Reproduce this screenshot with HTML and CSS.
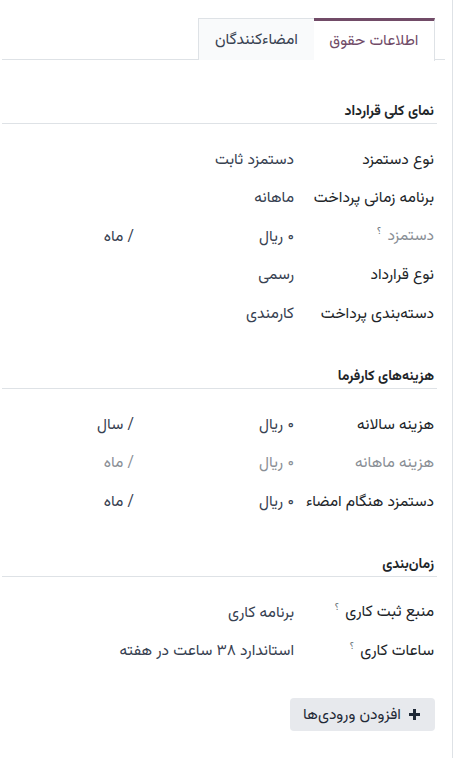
FILE: index.html
```html
<!DOCTYPE html>
<html lang="fa" dir="rtl">
<head>
    <meta charset="UTF-8">
    <meta name="viewport" content="width=device-width, initial-scale=1.0">
    <title>اطلاعات حقوق</title>
    <link rel="stylesheet" href="styles.css">
</head>
<body>
    <div class="sheet">
        <div class="tabs">
            <div class="tab active">اطلاعات حقوق</div>
            <div class="tab">امضاءکنندگان</div>
        </div>

        <div class="section first">
            <div class="section-title">نمای کلی قرارداد</div>
            <div class="row">
                <div class="label">نوع دستمزد</div>
                <div class="value">دستمزد ثابت</div>
            </div>
            <div class="row">
                <div class="label">برنامه زمانی پرداخت</div>
                <div class="value">ماهانه</div>
            </div>
            <div class="row">
                <div class="label muted">دستمزد <sup class="help">؟</sup></div>
                <div class="value">
                    <span class="amount">۰ ریال</span>
                    <span class="unit">/ ماه</span>
                </div>
            </div>
            <div class="row">
                <div class="label">نوع قرارداد</div>
                <div class="value">رسمی</div>
            </div>
            <div class="row">
                <div class="label">دسته‌بندی پرداخت</div>
                <div class="value">کارمندی</div>
            </div>
        </div>

        <div class="section">
            <div class="section-title">هزینه‌های کارفرما</div>
            <div class="row">
                <div class="label">هزینه سالانه</div>
                <div class="value">
                    <span class="amount">۰ ریال</span>
                    <span class="unit">/ سال</span>
                </div>
            </div>
            <div class="row muted">
                <div class="label">هزینه ماهانه</div>
                <div class="value">
                    <span class="amount">۰ ریال</span>
                    <span class="unit">/ ماه</span>
                </div>
            </div>
            <div class="row">
                <div class="label">دستمزد هنگام امضاء</div>
                <div class="value">
                    <span class="amount">۰ ریال</span>
                    <span class="unit">/ ماه</span>
                </div>
            </div>
        </div>

        <div class="section">
            <div class="section-title">زمان‌بندی</div>
            <div class="row">
                <div class="label">منبع ثبت کاری <sup class="help">؟</sup></div>
                <div class="value">برنامه کاری</div>
            </div>
            <div class="row">
                <div class="label">ساعات کاری <sup class="help">؟</sup></div>
                <div class="value">استاندارد ۳۸ ساعت در هفته</div>
            </div>
        </div>

        <div class="actions">
            <button class="btn-add">
                <svg class="plus" width="11" height="11" viewBox="0 0 11 11"><path d="M4 0h3v4h4v3H7v4H4V7H0V4h4z" fill="#1f2937"/></svg>
                افزودن ورودی‌ها
            </button>
        </div>
    </div>
</body>
</html>
```

FILE: styles.css
```css
* {
    box-sizing: border-box;
    margin: 0;
    padding: 0;
}

html, body {
    background: #fff;
}

body {
    font-family: "Vazirmatn", "Noto Sans Arabic", "DejaVu Sans", sans-serif;
    font-size: 15.6px;
    font-weight: 400;
    color: #212529;
    direction: rtl;
}

.sheet {
    width: 451px;
    min-height: 758px;
    border-right: 1px solid #dee2e6;
    padding-top: 18px;
}

/* tabs */
.tabs {
    display: flex;
    margin-right: 7px;
    padding-right: 10px;
    border-bottom: 1px solid #dee2e6;
    height: 42px;
}

.tab {
    height: 42px;
    padding: 0 16px;
    display: flex;
    align-items: center;
    background: #f9fafb;
    border: 1px solid #dee2e6;
    border-bottom: none;
    border-right: none;
    color: #374151;
}

.tab.active {
    background: #fff;
    color: #714b67;
    border-top: 3px solid #714b67;
    border-right: 1px solid #dee2e6;
    border-left: none;
    margin-bottom: -1px;
    height: 43px;
    padding: 0 15.5px;
}

/* sections */
.section {
    margin-right: 15px;
    margin-top: 33.75px;
}

.section.first {
    margin-top: 41.5px;
}

.section-title {
    font-weight: bold;
    font-size: 14px;
    line-height: 20px;
    padding: 0 3px 1.5px 0;
    border-bottom: 1px solid #dee2e6;
    margin-bottom: 16.25px;
}

.row {
    display: flex;
    align-items: center;
    height: 38.5px;
    padding-right: 3px;
}

.label {
    width: 140px;
    flex-shrink: 0;
}

.value {
    display: flex;
    align-items: center;
    color: #374151;
}

.amount {
    width: 160px;
}

.muted,
.muted .label,
.muted .value {
    color: #8a8f96;
}

.help {
    font-size: 10px;
    color: #6c757d;
    vertical-align: super;
    margin-right: 2px;
}

.actions {
    margin-top: 27.75px;
    padding-right: 17px;
}

.btn-add {
    font-family: inherit;
    font-size: 15.6px;
    color: #1f2937;
    background: #e7e9ed;
    border: none;
    border-radius: 4px;
    height: 33px;
    padding: 0 15px 0 13px;
    display: flex;
    align-items: center;
    gap: 8px;
}
```
